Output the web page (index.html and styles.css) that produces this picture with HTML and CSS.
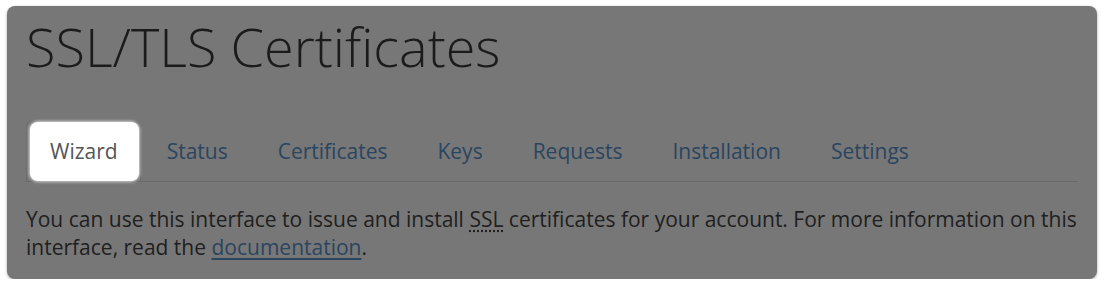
FILE: index.html
```html
<!DOCTYPE html>
<html lang="en">
<head>
  <meta charset="utf-8">
  <link rel="stylesheet" href="styles.css">
</head>
<body>
  <div class="page">
    <h1 class="title">SSL/TLS Certificates</h1>

    <ul class="tabs">
      <li class="tab active"><a href="#" class="tab-link">Wizard</a></li>
      <li class="tab"><a href="#" class="tab-link">Status</a></li>
      <li class="tab"><a href="#" class="tab-link">Certificates</a></li>
      <li class="tab"><a href="#" class="tab-link">Keys</a></li>
      <li class="tab"><a href="#" class="tab-link">Requests</a></li>
      <li class="tab"><a href="#" class="tab-link">Installation</a></li>
      <li class="tab"><a href="#" class="tab-link">Settings</a></li>
    </ul>

    <p class="intro">
      You can use this interface to issue and install <abbr title="Secure Sockets Layer">SSL</abbr> certificates for your account. For more information on this interface, read the <a href="#" class="doc-link">documentation</a>.
    </p>
  </div>
</body>
</html>
```

FILE: styles.css
```css
body {
  margin: 0;
  background-color: #ffffff;
  font-family: "Open Sans", Arial, sans-serif;
}

.page {
  margin: 6px 7px 0 7px;
  height: 273px;
  padding: 0 19px;
  box-sizing: border-box;
  background-color: #777777;
  border-radius: 8px;
  box-shadow: 0 1px 3px rgba(0, 0, 0, 0.35);
  overflow: hidden;
}

.title {
  margin: 0;
  padding-top: 9px;
  font-size: 54px;
  font-weight: 300;
  line-height: 62px;
  color: #1b1b1b;
}

.tabs {
  display: flex;
  list-style: none;
  margin: 44px 0 0 0;
  padding: 0;
  border-bottom: 1px solid #6a6a6a;
}

.tab {
  margin-right: 2px;
  border: 1px solid transparent;
  border-bottom: none;
  border-radius: 6px 6px 0 0;
}

.tab-link {
  display: block;
  padding: 0 23px;
  line-height: 59px;
  font-size: 21px;
  color: #2a4560;
  text-decoration: none;
}

.tab.active {
  border-color: #6c6c6c;
}

.tab.active .tab-link {
  margin: 0 1px 0 3px;
  padding: 0 21px 0 20px;
  background-color: #ffffff;
  color: #555555;
  border-radius: 8px;
  box-shadow: 0 0 3px 1px rgba(255, 255, 255, 0.7);
}

.intro {
  margin: 23px 0 0 0;
  font-size: 21px;
  line-height: 28px;
  color: #202020;
}

abbr {
  text-decoration: underline dotted;
  text-underline-offset: 3px;
}

.doc-link {
  color: #2a4560;
  text-decoration: underline;
  text-underline-offset: 3px;
}
```
